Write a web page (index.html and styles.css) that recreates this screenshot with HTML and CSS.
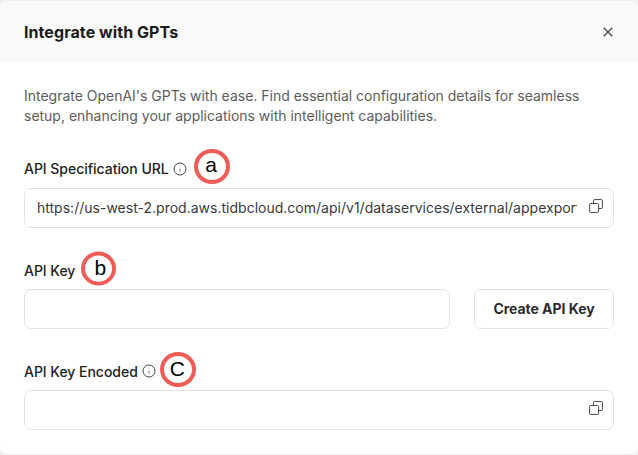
FILE: index.html
```html
<!DOCTYPE html>
<html lang="en">
<head>
<meta charset="utf-8">
<title>Integrate with GPTs</title>
<link rel="stylesheet" href="styles.css">
</head>
<body>
<section class="modal">
  <header class="header">
    <h1>Integrate with GPTs</h1>
    <svg class="close" viewBox="0 0 12 12"><path d="M1.7 1.7l8.6 8.6M10.3 1.7l-8.6 8.6"/></svg>
  </header>
  <main class="content">
    <p class="intro">Integrate OpenAI's GPTs with ease. Find essential configuration details for seamless<br>setup, enhancing your applications with intelligent capabilities.</p>
    <div class="field">
      <div class="label first"><span class="name">API Specification URL</span>
        <svg class="info" viewBox="0 0 14 14"><circle cx="7" cy="7" r="6"/><path class="mark" d="M7 6.7v2.9M7 4.5v.7"/></svg>
        <span class="badge a"><svg viewBox="0 0 36 35"><ellipse cx="18" cy="17.5" rx="16" ry="15.5"/></svg><b>a</b></span>
      </div>
      <div class="input"><span class="url">https://us-west-2.prod.aws.tidbcloud.com/api/v1/dataservices/external/appexport</span>
        <svg class="copy" viewBox="0 0 14 14"><rect x=".6" y="4.5" width="9" height="8.9" rx="1"/><path d="M4.5 4.5V1.6a1 1 0 0 1 1-1h6.9a1 1 0 0 1 1 1v6.9a1 1 0 0 1-1 1H9.6"/></svg>
      </div>
    </div>
    <div class="field">
      <div class="label"><span class="name">API Key</span>
        <span class="badge b"><svg viewBox="0 0 36 35"><ellipse cx="18" cy="17.5" rx="16" ry="15.5"/></svg><b>b</b></span>
      </div>
      <div class="row"><div class="input"></div><button>Create API Key</button></div>
    </div>
    <div class="field">
      <div class="label"><span class="name">API Key Encoded</span>
        <svg class="info" viewBox="0 0 14 14"><circle cx="7" cy="7" r="6"/><path class="mark" d="M7 6.7v2.9M7 4.5v.7"/></svg>
        <span class="badge c"><svg viewBox="0 0 36 35"><ellipse cx="18" cy="17.5" rx="16" ry="15.5"/></svg><b>C</b></span>
      </div>
      <div class="input"><span class="url"></span>
        <svg class="copy" viewBox="0 0 14 14"><rect x=".6" y="4.5" width="9" height="8.9" rx="1"/><path d="M4.5 4.5V1.6a1 1 0 0 1 1-1h6.9a1 1 0 0 1 1 1v6.9a1 1 0 0 1-1 1H9.6"/></svg>
      </div>
    </div>
  </main>
</section>
</body>
</html>
```
FILE: styles.css
```css
* { box-sizing: border-box; }
body { margin: 0; background: #efefef; font-family: Inter, sans-serif; color: #262626; }
svg { fill: none; stroke: #444; flex: none; }
.modal { margin-top: 1px; height: 453px; background: #fff; border-radius: 7px; overflow: hidden; }
.header { height: 61px; padding: 0 24px; background: #f9f9f9; display: flex; align-items: center; justify-content: space-between; }
h1 { margin: 0; font-size: 16px; font-weight: 700; line-height: 24px; color: #1c1c1c; letter-spacing: .07px; }
.close { width: 12px; height: 12px; stroke-width: 1.3; }
.content { padding: 24px 24px 0; }
.intro { margin: 0 0 30px; font-size: 14px; line-height: 20px; color: #5c5c5c; white-space: nowrap; letter-spacing: -.01px; }
.field { height: 101px; }
.label { height: 32px; padding-bottom: 5px; display: flex; align-items: center; }
.label.first { padding-bottom: 7px; }
.name { font-size: 14px; font-weight: 500; line-height: 20px; white-space: nowrap; color: #222; letter-spacing: -.03px; }
.info { width: 14px; height: 14px; margin-left: 4px; }
.mark { stroke: #777; }
.label:not(.first) .info { position: relative; top: -1px; }
.badge { position: relative; width: 36px; height: 35px; margin: -8px 0; flex: none; }
.badge.a { margin-left: 7px; top: -2px; }
.badge.b { width: 35px; margin-left: 6px; top: -2px; }
.badge.c { margin-left: 4px; top: -2px; }
.badge svg { position: absolute; inset: 0; width: 100%; height: 100%; stroke: #ef5b55; stroke-width: 4; }
.badge b { position: absolute; inset: 0; text-align: center; font: 21px/33px "Liberation Sans", sans-serif; color: #000; }
.badge.a b { top: -1px; right: 1px; }
.badge.b b { left: 3px; }
.badge.c b { right: 1px; }
.input { height: 40px; border: 1px solid #e3e3e3; border-radius: 7px; display: flex; align-items: center; padding: 0 10px 0 12px; flex: 1; }
.url { flex: 1; min-width: 0; overflow: hidden; white-space: nowrap; font-size: 14px; line-height: 20px; margin-right: 12px; color: #3a3a3a; letter-spacing: .009px; }
.copy { width: 14px; height: 14px; margin-bottom: 4px; }
.row { display: flex; gap: 24px; }
button { width: 140px; height: 40px; border: 1px solid #e3e3e3; border-radius: 7px; background: #fff; color: #2c2c2c; font: 700 14px/20px Inter, sans-serif; letter-spacing: -.04px; padding: 0 0 1px; }
```
